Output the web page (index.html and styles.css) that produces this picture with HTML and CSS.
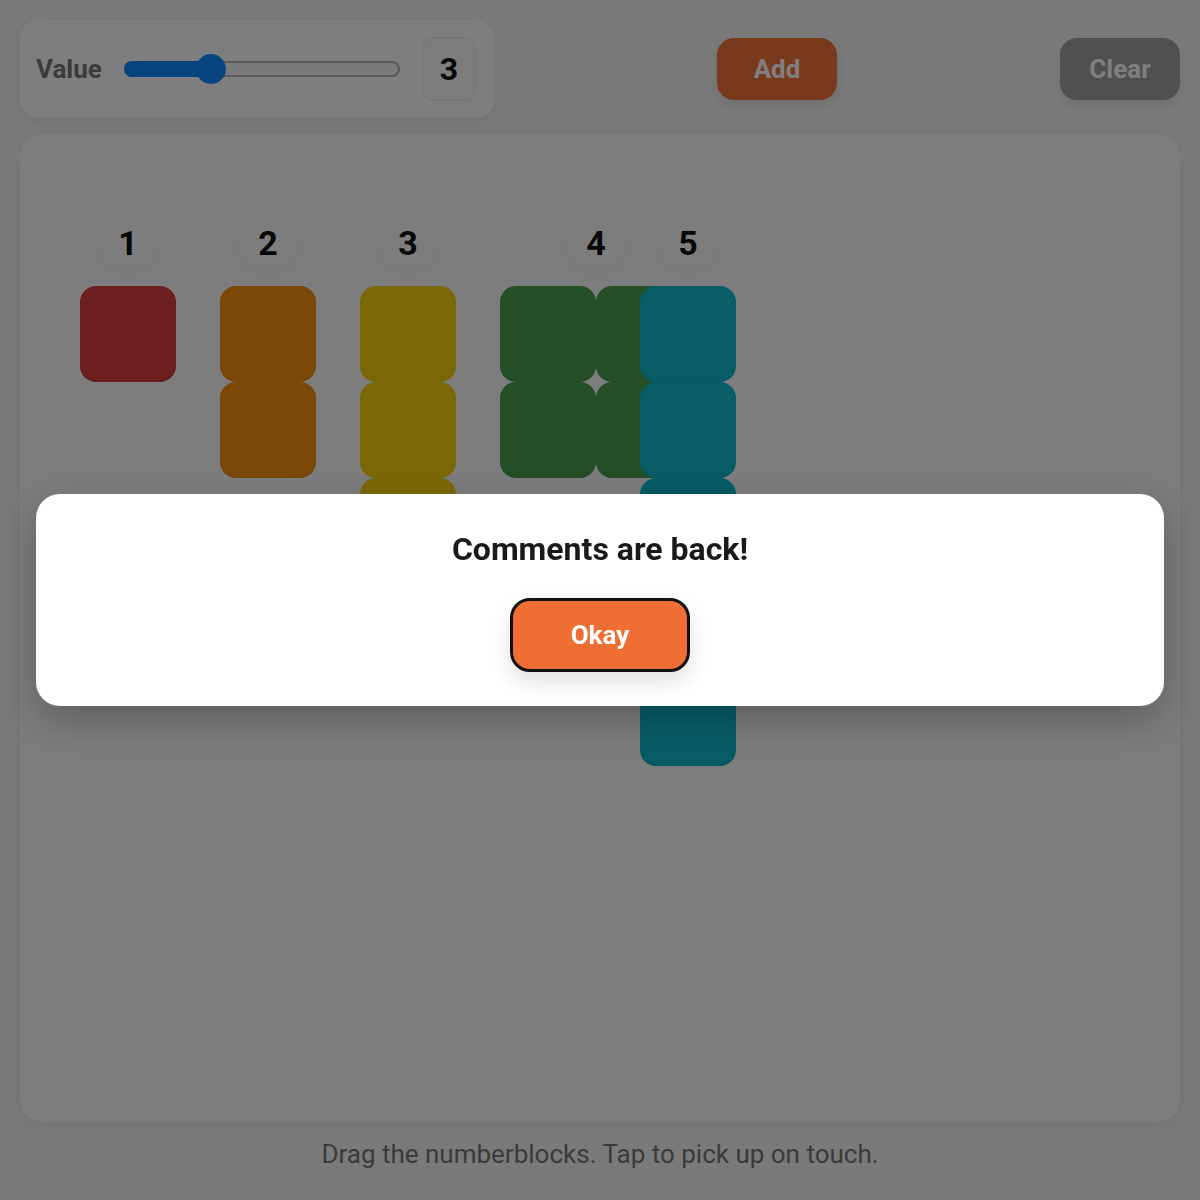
FILE: index.html
```html
<!DOCTYPE html>
<html lang="en">
<head>
<meta charset="utf-8">
<title>Numberblocks</title>
<link rel="stylesheet" href="styles.css">
</head>
<body>
<div class="app">
  <header class="toolbar">
    <div class="control-card">
      <span class="control-label">Value</span>
      <div class="slider">
        <div class="slider-fill" style="width: 87px"></div>
        <div class="slider-thumb" style="left: 85px"></div>
      </div>
      <div class="value-box">3</div>
    </div>
    <button class="btn btn-add">Add</button>
    <button class="btn btn-clear">Clear</button>
  </header>

  <main class="board">
    <div class="nb nb-1">
      <div class="nb-label"><span>1</span></div>
      <div class="cells cols-1">
        <div class="cell"></div>
      </div>
    </div>
    <div class="nb nb-2">
      <div class="nb-label"><span>2</span></div>
      <div class="cells cols-1">
        <div class="cell"></div><div class="cell"></div>
      </div>
    </div>
    <div class="nb nb-3">
      <div class="nb-label"><span>3</span></div>
      <div class="cells cols-1">
        <div class="cell"></div><div class="cell"></div><div class="cell"></div>
      </div>
    </div>
    <div class="nb nb-4">
      <div class="nb-label"><span>4</span></div>
      <div class="cells cols-2">
        <div class="cell"></div><div class="cell"></div><div class="cell"></div><div class="cell"></div>
      </div>
    </div>
    <div class="nb nb-5">
      <div class="nb-label"><span>5</span></div>
      <div class="cells cols-1">
        <div class="cell"></div><div class="cell"></div><div class="cell"></div><div class="cell"></div><div class="cell"></div>
      </div>
    </div>
  </main>

  <p class="hint">Drag the numberblocks. Tap to pick up on touch.</p>
</div>

<div class="overlay">
  <div class="modal">
    <h2 class="modal-title">Comments are back!</h2>
    <button class="btn-okay">Okay</button>
  </div>
</div>
</body>
</html>
```

FILE: styles.css
```css
* { box-sizing: border-box; }

html, body {
  margin: 0;
  padding: 0;
}

body {
  background: #f4f4f4;
  font-family: Roboto, "Liberation Sans", Arial, sans-serif;
  color: #111;
  width: 1200px;
  height: 1200px;
  overflow: hidden;
}

.app {
  padding: 20px;
  display: flex;
  flex-direction: column;
}

.toolbar {
  display: flex;
  align-items: center;
  justify-content: space-between;
  height: 98px;
}

.control-card {
  display: flex;
  align-items: center;
  gap: 22px;
  height: 98px;
  width: 474px;
  padding: 0 17px 0 16px;
  background: #fdfdfd;
  border-radius: 18px;
  box-shadow: 0 4px 14px rgba(0, 0, 0, 0.06);
}

.control-label {
  font-size: 26px;
  font-weight: 700;
  color: #777;
}

.slider {
  position: relative;
  width: 276px;
  height: 16px;
  border: 2px solid #b2b2b2;
  border-radius: 8px;
  background: #f4f4f4;
}

.slider-fill {
  position: absolute;
  left: -2px;
  top: -2px;
  height: 16px;
  background: #1089ff;
  border-radius: 8px;
}

.slider-thumb {
  position: absolute;
  top: 50%;
  width: 30px;
  height: 30px;
  margin-left: -15px;
  margin-top: -15px;
  border-radius: 50%;
  background: #1089ff;
}

.value-box {
  width: 54px;
  height: 64px;
  display: flex;
  align-items: center;
  justify-content: center;
  border: 1px solid #e6e6e6;
  border-radius: 12px;
  font-size: 32px;
  font-weight: 700;
  color: #111;
  background: #fbfbfb;
}

.btn {
  width: 120px;
  height: 62px;
  border: none;
  border-radius: 17px;
  font-family: inherit;
  font-size: 26px;
  font-weight: 700;
  color: #fff;
  box-shadow: 0 4px 10px rgba(0, 0, 0, 0.1);
}

.btn-add { background: #f2723a; }
.btn-clear { background: #a0a0a0; }

.board {
  position: relative;
  margin-top: 16px;
  height: 988px;
  background: #fafafa;
  border-radius: 22px;
  box-shadow: 0 4px 16px rgba(0, 0, 0, 0.06);
}

.nb {
  position: absolute;
  top: 87px;
  display: flex;
  flex-direction: column;
  align-items: center;
}

.nb-1 { left: 60px; }
.nb-2 { left: 200px; }
.nb-3 { left: 340px; }
.nb-4 { left: 480px; }
.nb-5 { left: 620px; }

.nb-label {
  height: 44px;
  margin-bottom: 21px;
  display: flex;
  align-items: center;
}

.nb-label span {
  display: block;
  padding: 0 18px;
  line-height: 44px;
  font-size: 34px;
  font-weight: 700;
  color: #111;
  border-radius: 16px;
  background: rgba(255, 255, 255, 0.2);
  box-shadow: 0 6px 14px rgba(0, 0, 0, 0.02);
}

.cells {
  display: grid;
  grid-auto-rows: 96px;
}

.cols-1 { grid-template-columns: 96px; }
.cols-2 { grid-template-columns: 96px 96px; }

.cell {
  border-radius: 16px;
  box-shadow: inset 0 -3px 6px rgba(0, 0, 0, 0.04);
}

.nb-1 .cell { background: #dc3e3e; }
.nb-2 .cell { background: #fa9312; }
.nb-3 .cell { background: #fad40c; }
.nb-4 .cell { background: #4aa04e; }
.nb-5 .cell { background: #10bace; }

.hint {
  margin: 17px 0 0;
  text-align: center;
  font-size: 26px;
  line-height: 30px;
  color: #767676;
}

.overlay {
  position: fixed;
  inset: 0;
  background: rgba(0, 0, 0, 0.5);
  display: flex;
  align-items: center;
  justify-content: center;
  padding: 0 36px;
}

.modal {
  width: 100%;
  height: 212px;
  background: #fff;
  border-radius: 24px;
  padding: 35px 24px 34px;
  display: flex;
  flex-direction: column;
  align-items: center;
  box-shadow: 0 14px 40px rgba(0, 0, 0, 0.25);
}

.modal-title {
  margin: 0;
  font-size: 32px;
  line-height: 40px;
  font-weight: 700;
  color: #1a1a1a;
}

.btn-okay {
  margin-top: 29px;
  width: 180px;
  height: 74px;
  border: 3px solid #111;
  border-radius: 20px;
  background: #ee6e33;
  color: #fff;
  font-family: inherit;
  font-size: 26px;
  font-weight: 700;
  box-shadow: 0 10px 22px rgba(0, 0, 0, 0.12);
}
```
